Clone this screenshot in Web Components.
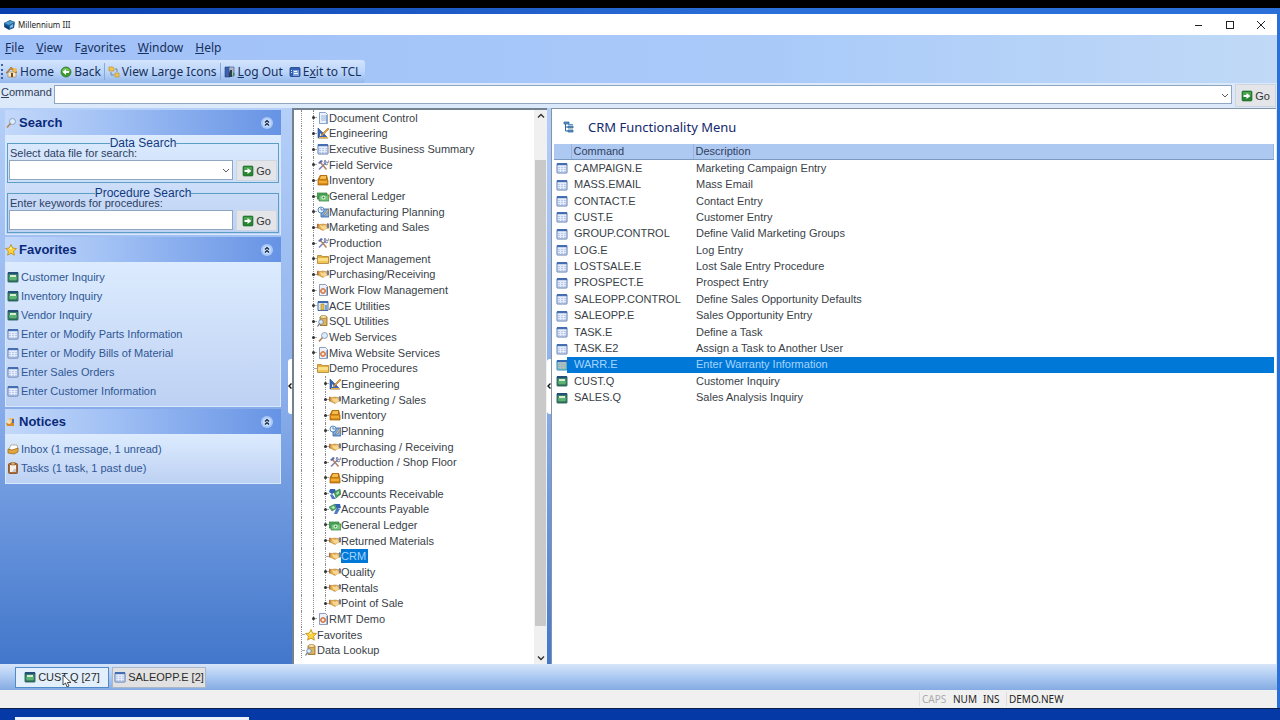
<!DOCTYPE html>
<html lang="en">
<head>
<meta charset="utf-8">
<title>Millennium III</title>
<style>
html, body { margin: 0; height: 100%; }
body { font: 11px/16px "Liberation Sans", Arial, sans-serif; color: #3a3f48; background: #0a3fae; overflow: hidden; }
</style>
</head>
<body>
<mi-app></mi-app>
<script>
const ICONS = {
  app: '<path d="M1 4l6-3 5 2-1 6-5 2-5-3z" fill="#1d5f96"/><path d="M1 4l6-2 5 1-6 3z" fill="#4e9ac9"/><path d="M2 6l4 2v2L2 8z" fill="#123c68"/><path d="M7 7l3-2v3l-3 1z" fill="#7fc0e2"/>',
  home: '<path d="M2 6h8v5H2z" fill="#f4ead2" stroke="#a97a34" stroke-width=".6"/><path d="M0 7l5-6 6 5-1 1-5-4-4 4z" fill="#d8922d" stroke="#8a5516" stroke-width=".5"/><path d="M5 7h2v4H5z" fill="#7a4a20"/><circle cx="9" cy="4" r="2" fill="#f5b949"/>',
  back: '<circle cx="6" cy="6" r="5" fill="#3f9a2d" stroke="#2b7221" stroke-width=".7"/><path d="M6 2a4 4 0 0 0-4 4h8a4 4 0 0 0-4-4z" fill="#86cf6a" opacity=".7"/><path d="M2.500 6l3.500-3v2h3v2H6v2z" fill="#fff"/>',
  large: '<path d="M1 1h4l1 1v3H1z" fill="#f2c44d" stroke="#b58a24" stroke-width=".6"/><path d="M7 7h4v4H7z" fill="#f2c44d" stroke="#b58a24" stroke-width=".6"/><path d="M3 6v3h3M7 3h2v3" fill="none" stroke="#7b8896"/>',
  logout: '<path d="M1 1h5v10H1z" fill="#3a62ae" stroke="#203c7c" stroke-width=".6"/><path d="M5 1h5v9H5z" fill="#a4b9da" stroke="#304f8c" stroke-width=".6"/><path d="M6 4h2v7H5V7z" fill="#2f3c52"/><circle cx="8" cy="3" r="1" fill="#d8b184"/><path d="M9 6l2 2-2 3z" fill="#3e9645"/>',
  exit: '<rect x="1" y="1.500" width="10" height="9" rx="1" fill="#3361b4" stroke="#203f86" stroke-width=".8"/><path d="M4 4h6v6H4z" fill="#7ea4e0"/><path d="M5 5h3v1H5zM5 7h4v1H5z" fill="#fff"/><path d="M2 4h1v1H2zM2 6h1v1H2z" fill="#dfe9ff"/>',
  go: '<rect x="1" y="1" width="10" height="10" rx="1" fill="#278533" stroke="#196226" stroke-width=".6"/><path d="M2 2h8v3H2z" fill="#5fb560" opacity=".6"/><path d="M2.500 5h3V3l4 3-4 3V7h-3z" fill="#fff"/>',
  search: '<circle cx="7.500" cy="4.500" r="3" fill="#dcecff" stroke="#8ba0bd"/><path d="M5.500 6.500L2 10.500" stroke="#b3865a" stroke-width="1.600"/>',
  star: '<path d="M6 .5l1.600 3.600 3.900.4-2.900 2.700.8 4L6 9.200l-3.400 2 .8-4L.5 4.500l3.900-.4z" fill="#fbd23f" stroke="#bd8a18" stroke-width=".8"/><path d="M6 2.500l1 2.500h-3z" fill="#fff3a8"/>',
  notice: '<path d="M4 2h5v6H4z" fill="#f2c069"/><path d="M1 7h5l3-4v7H2z" fill="#d58b27"/><circle cx="4" cy="6" r="2" fill="#f7dfa8"/><path d="M7 3h2v4H7z" fill="#5d6fa6"/>',
  form: '<rect x="1" y="1.500" width="10" height="9.500" rx=".5" fill="#e6edfa" stroke="#4f70aa" stroke-width=".9"/><path d="M1 1h10v2.200H1z" fill="#456db2"/><path d="M2 5h8v5H2z" fill="#b9cbed"/><path d="M2 6.500h8M2 8.500h8M4.500 5v5M7.500 5v5" stroke="#f3f7ff" stroke-width=".7"/>',
  inq: '<rect x="1" y="1.500" width="10" height="9.500" rx=".5" fill="#3d8a68" stroke="#2b5c66" stroke-width=".9"/><path d="M1 1h10v2.200H1z" fill="#234f78"/><path d="M3 4h6v2H3z" fill="#d8eecf"/><path d="M2 6h8l-1 4H3z" fill="#5db374"/><path d="M2 9.500h8v1H2z" fill="#225c4b"/>',
  inbox: '<path d="M4 2h6l1 4-5 3-4-3z" fill="#fff" stroke="#9d9377" stroke-width=".7"/><path d="M1 6l4 1 6-2v4l-4 2-6-1z" fill="#e0a53b" stroke="#94661b" stroke-width=".7"/>',
  tasks: '<rect x="1.500" y="1.500" width="9" height="10" rx="1" fill="#b2692c" stroke="#74411a" stroke-width=".7"/><path d="M3 3h6v7H3z" fill="#f8f2e7"/><path d="M4 0h4v3H4z" fill="#d9ad70" stroke="#74411a" stroke-width=".5"/><path d="M7 7h2v3H5z" fill="#c6c9cf"/>',
  doc: '<path d="M2.500.5h6l2 2v9h-8z" fill="#edf3fc" stroke="#6f8fc0" stroke-width=".8"/><path d="M4 4h5M4 6h5M4 8h5" stroke="#8fabd8" stroke-width=".9"/><path d="M9 3h2v9H9z" fill="#8aa8d6"/>',
  eng: '<path d="M1 1v10h10z" fill="#3b67bb" stroke="#254687" stroke-width=".6"/><path d="M3 6v3h3z" fill="#e9f0fb"/><path d="M11 1L5 7l-1 2 2-1 6-6z" fill="#e8a33a" stroke="#8a5a1d" stroke-width=".5"/><path d="M2 10h9v1.500H2z" fill="#e6b055"/>',
  tools: '<path d="M2 10.500l7-7" stroke="#7b83b8" stroke-width="1.600"/><path d="M9.500 10.500l-6-7" stroke="#b4825f" stroke-width="1.500"/><path d="M1 4l3-3 2 1-3 3z" fill="#5c6ca8"/><path d="M8 1l1 2 2 1 .5-2.500M8 1l-1 3 2 2 2-1" fill="none" stroke="#7a86aa"/>',
  box: '<path d="M1 5h9l1 1v5H1z" fill="#dc8d17" stroke="#93590c" stroke-width=".7"/><path d="M1 5l2-4h7l1 4z" fill="#b97013"/><path d="M3 4l1-2h5v3H3z" fill="#f4bd50"/><path d="M2 7h8v2H2z" fill="#f1ad36"/>',
  money: '<path d="M0 3h10v6H0z" fill="#4fac5c" stroke="#2b7b3b" stroke-width=".7"/><path d="M2 5h10v6H2z" fill="#74c57b" stroke="#2b7b3b" stroke-width=".7"/><circle cx="6.500" cy="7.500" r="2" fill="#e6f6df"/><circle cx="6.500" cy="7.500" r="1" fill="#348447"/>',
  plan: '<path d="M4 3h8v8H4z" fill="#7faee4" stroke="#315d9f" stroke-width=".8"/><circle cx="4" cy="4" r="3" fill="#e9f3fc" stroke="#447cba" stroke-width=".9"/><path d="M4 2v2h2" fill="none" stroke="#315d9f" stroke-width=".7"/><path d="M11 3L7 8l-1 2 2-1 4-5z" fill="#f0d9a1" stroke="#4d5568" stroke-width=".5"/>',
  hands: '<path d="M0 3l3 .5 3-.5 3 .5L12 3v4l-3 .5L6 9.500 2 7.500 0 7z" fill="#e6ad4b" stroke="#a9742c" stroke-width=".5"/><path d="M3 4l3 1 2-1 2 3-3 2-3-2z" fill="#f7d893"/><path d="M10 2l2 1v4l-2 0z" fill="#6b7ca6"/><path d="M0 3h1.500v4H0z" fill="#b46b48"/>',
  folder: '<path d="M.5 2.500h4l1 1h6v7H.5z" fill="#e3ae3e" stroke="#a47a22" stroke-width=".7"/><path d="M1 5h10v5H1z" fill="#fbdf87"/><path d="M1 8h10v2H1z" fill="#f0c557"/>',
  web: '<path d="M2.500.5h6l2 2v9h-8z" fill="#eef1f8" stroke="#7587ad" stroke-width=".8"/><circle cx="6" cy="7" r="2.500" fill="#e99b63" stroke="#bd5a31" stroke-width=".7"/><circle cx="6" cy="7" r="1" fill="#fff"/><path d="M9.500 3h1.500v8H9.500z" fill="#64779f"/>',
  ace: '<path d="M1 1.500h10v9H1z" fill="#dbe8f8" stroke="#375f9f" stroke-width=".9"/><path d="M1 1h10v2H1z" fill="#3c68ad"/><path d="M4 4h3v6H4z" fill="#e6be4f" stroke="#9a7421" stroke-width=".5"/><path d="M8 5h2v5H8z" fill="#74a2db"/>',
  sql: '<path d="M3 2h7v8.500H3z" fill="#dfb257" stroke="#8b6526" stroke-width=".8"/><ellipse cx="6.500" cy="2" rx="3.500" ry="1.500" fill="#f8e2a8" stroke="#8b6526" stroke-width=".6"/><circle cx="4" cy="7" r="2.300" fill="#dcebfa" stroke="#6684ac" stroke-width=".8"/><path d="M2.500 8.500l-2 3" stroke="#6d7480" stroke-width="1.200"/>',
  ar: '<path d="M1 1h5l1 3-4 2-3-2z" fill="#3462b3"/><path d="M5 4l6-3 1 5-5 4z" fill="#44a160" stroke="#26693b" stroke-width=".5"/><path d="M7 5l3-2v2L8 7z" fill="#b8e5bb"/><path d="M3 6l4 5H3L1 7z" fill="#4c7ac5"/>',
  ap: '<path d="M0 4l6-3 2 4-5 3z" fill="#4aa864" stroke="#26693b" stroke-width=".5"/><path d="M2 4l3-1 1 2-2 1z" fill="#bfe8c0"/><path d="M6 1h5l1 4-4 1z" fill="#3462b3"/><path d="M7 6h4l-3 5H5z" fill="#4c7ac5"/>',
  tree: '<path d="M1 1h5v2H1zM5 5h5v2H5zM5 9h5v2H5z" fill="#5b93c7" stroke="#32699f" stroke-width=".8"/><path d="M5 3.500h5" stroke="#5b93c7"/><path d="M2.500 3v7H5M2.500 6H5" fill="none" stroke="#32699f"/>',
  chev: '<path d="M3 5l3 3 3-3" fill="none" stroke="#555c66" stroke-width="1"/>',
  up: '<path d="M3 7.500l3-3 3 3" fill="none" stroke="#333" stroke-width="1.400"/>',
  down: '<path d="M3 4.500l3 3 3-3" fill="none" stroke="#333" stroke-width="1.400"/>',
  left: '<path d="M7.500 3.500L5 6l2.500 2.500" fill="none" stroke="#111" stroke-width="1.400"/>',
  collapse: '<circle cx="6" cy="6" r="6" fill="#a9c9f7"/><circle cx="6" cy="6" r="4" fill="#c8defb"/><path d="M4 5.500l2-2 2 2M4 8.500l2-2 2 2" fill="none" stroke="#10203f" stroke-width="1.200"/>',
  min: '<path d="M2 6.500h7" stroke="#222"/>',
  max: '<rect x="2.500" y="2.500" width="7" height="7" fill="none" stroke="#222"/>',
  close: '<path d="M2 2l8 8M10 2l-8 8" stroke="#222" stroke-width="1"/>',
  cursor: '<path d="M2 0v10l2.500-2 1.500 4 2-1-1.700-3.500H10z" fill="#fff" stroke="#222" stroke-width=".8"/>'
};

const define = (name, css, html) => customElements.define(name, class extends HTMLElement {
  connectedCallback() {
    if (this.shadowRoot) return;
    const root = this.attachShadow({ mode: 'open' });
    const markup = typeof html === 'function' ? html(this) : html;
    root.innerHTML = `<style>*{box-sizing:border-box}:host{display:block;box-sizing:border-box}button,input,select{font:inherit;color:inherit;margin:0}${css}</style>${markup}`;
  }
});
const icon = n => `<mi-icon name="${n}"></mi-icon>`;

define('mi-icon', ':host{display:block;flex:none;width:12px;height:12px}svg{display:block;width:100%;height:100%}',
  el => `<svg viewBox="0 0 12 12" aria-hidden="true">${ICONS[el.getAttribute('name')]}</svg>`);

define('mi-titlebar', `
:host{display:flex;align-items:center;height:21px;background:#fff;padding:0 10px 0 3px;gap:3px;font:8px/12px "Noto Sans",sans-serif;color:#222}
span{flex:1}
button{border:0;background:none;padding:0;margin-left:16px;width:12px;height:12px}`,
  `${icon('app')}<span>Millennium III</span>
  <button aria-label="Minimize">${icon('min')}</button><button aria-label="Maximize">${icon('max')}</button><button aria-label="Close">${icon('close')}</button>`);

define('mi-menubar', `
:host{display:flex;align-items:center;gap:12px;height:25px;padding:0 5px;font:12px/16px "Noto Sans",sans-serif;color:#16305c}
button{border:0;background:none;padding:0}`,
  '<button><u>F</u>ile</button><button><u>V</u>iew</button><button>F<u>a</u>vorites</button><button><u>W</u>indow</button><button><u>H</u>elp</button>');

define('mi-toolbar', `
:host{display:flex;height:23px;font:12px/16px "Noto Sans",sans-serif;color:#16305c}
div{display:flex;align-items:center;padding:0 1px;border-radius:0 3px 3px 0;background:linear-gradient(#d3e4fd,#bdd6fa 50%,#94b8ec)}
i{width:2px;height:15px;border-left:2px dotted #3f5f9f}
button{display:flex;align-items:center;gap:2px;border:0;background:none;padding:0 3px}
hr{width:1px;height:17px;border:0;margin:0;background:#88a8d8}`,
  `<div role="toolbar"><i></i><button>${icon('home')}Home</button><button>${icon('back')}Back</button><hr><button>${icon('large')}View Large Icons</button><hr><button>${icon('logout')}<span><u>L</u>og Out</span></button><button>${icon('exit')}<span>E<u>x</u>it to TCL</span></button></div>`);

define('mi-go', `
:host{display:block;flex:none}
button{display:flex;align-items:center;justify-content:center;gap:2px;width:41px;height:100%;padding:0;border:1px solid #cdd5e0;background:#e3e5e8;color:#333}`,
  `<button>${icon('go')}Go</button>`);

define('mi-select', `
:host{display:block;position:relative}
select{display:block;width:100%;height:100%;appearance:none;background:#fff;border:1px solid #8fa6c0;border-radius:0;padding:0 14px 0 3px}
mi-icon{position:absolute;right:1px;top:0;bottom:0;margin:auto;pointer-events:none}`,
  el => `<select aria-label="${el.getAttribute('label')}"><option></option></select>${icon('chev')}`);

define('mi-commandbar', `
:host{display:flex;height:25px;padding:1px;gap:3px;background:#dce9fa;color:#2e3d58}
span{width:50px;line-height:16px}
mi-select{flex:1;margin:1px 0 3px}`,
  `<span><u>C</u>ommand</span><mi-select label="Command"></mi-select><mi-go></mi-go>`);

define('mi-group', `
header{display:flex;align-items:center;gap:2px;height:25px;padding:0 8px 0 0;background:linear-gradient(90deg,#c3d8fa,#9fbff4 40%,#6693e4)}
h2{flex:1;margin:0;font:bold 13px/16px "Liberation Sans",sans-serif;color:#0a2a78}
button{border:0;background:none;padding:0}
section{border:1px solid #d9e8fc;border-top:0;background:linear-gradient(#dcebfe,#bdd1f3)}`,
  el => `<header>${icon(el.getAttribute('icon'))}<h2>${el.getAttribute('heading')}</h2><button aria-label="Collapse">${icon('collapse')}</button></header><section><slot></slot></section>`);

define('mi-search', `
:host{display:grid;gap:5px;padding:3px 1px 1px}
fieldset{min-width:0;margin:0;padding:0 1px 1px;border:1px solid #5b9fc6;color:#2d4062}
legend{margin:0 auto;padding:0;font-size:12px;line-height:10px;color:#123a80}
label{display:block;line-height:10px;padding-left:1px;margin-bottom:2px}
div{display:flex;gap:3px;height:21px}
mi-select,input{flex:1;min-width:0;height:20px}
input{border:1px solid #8fa6c0;background:#fff;padding:0 3px}`,
  `<fieldset><legend>Data Search</legend><label>Select data file for search:</label><div><mi-select label="Select data file for search:"></mi-select><mi-go></mi-go></div></fieldset>
  <fieldset><legend>Procedure Search</legend><label for="kw">Enter keywords for procedures:</label><div><input id="kw"><mi-go></mi-go></div></fieldset>`);

define('mi-link', `
a{display:flex;align-items:center;gap:2px;height:19px;color:#2f5794;text-decoration:none}`,
  el => `<a href="#">${icon(el.getAttribute('icon'))}<slot></slot></a>`);

define('mi-sidebar', `
:host{display:flex;flex-direction:column;gap:2px;padding:2px 5px}
nav{padding:5px 1px 6px}`,
  `<mi-group icon="search" heading="Search"><mi-search></mi-search></mi-group>
  <mi-group icon="star" heading="Favorites"><nav>
    <mi-link icon="inq">Customer Inquiry</mi-link><mi-link icon="inq">Inventory Inquiry</mi-link><mi-link icon="inq">Vendor Inquiry</mi-link>
    <mi-link icon="form">Enter or Modify Parts Information</mi-link><mi-link icon="form">Enter or Modify Bills of Material</mi-link>
    <mi-link icon="form">Enter Sales Orders</mi-link><mi-link icon="form">Enter Customer Information</mi-link></nav></mi-group>
  <mi-group icon="notice" heading="Notices"><nav>
    <mi-link icon="inbox">Inbox (1 message, 1 unread)</mi-link><mi-link icon="tasks">Tasks (1 task, 1 past due)</mi-link></nav></mi-group>`);

define('mi-splitter', `
:host{display:flex;align-items:center;justify-content:flex-end}
div{width:4px;height:55px;display:flex;align-items:center;justify-content:center;background:#fff;border-radius:3px 0 0 3px;overflow:hidden}`,
  `<div>${icon('left')}</div>`);

const TREE = [
  [1, 'doc', 'Document Control'], [1, 'eng', 'Engineering'], [1, 'form', 'Executive Business Summary'], [1, 'tools', 'Field Service'],
  [1, 'box', 'Inventory'], [1, 'money', 'General Ledger'], [1, 'plan', 'Manufacturing Planning'], [1, 'hands', 'Marketing and Sales'],
  [1, 'tools', 'Production'], [1, 'folder', 'Project Management'], [1, 'hands', 'Purchasing/Receiving'], [1, 'web', 'Work Flow Management'],
  [1, 'ace', 'ACE Utilities'], [1, 'sql', 'SQL Utilities'], [1, 'search', 'Web Services'], [1, 'web', 'Miva Website Services'],
  [1, 'folder', 'Demo Procedures', 'open'], [2, 'eng', 'Engineering'], [2, 'hands', 'Marketing / Sales'], [2, 'box', 'Inventory'],
  [2, 'plan', 'Planning'], [2, 'hands', 'Purchasing / Receiving'], [2, 'tools', 'Production / Shop Floor'], [2, 'box', 'Shipping'],
  [2, 'ar', 'Accounts Receivable'], [2, 'ap', 'Accounts Payable'], [2, 'money', 'General Ledger'], [2, 'hands', 'Returned Materials'],
  [2, 'hands', 'CRM', 'selected'], [2, 'hands', 'Quality'], [2, 'hands', 'Rentals'], [2, 'hands', 'Point of Sale'],
  [1, 'web', 'RMT Demo'], [0, 'star', 'Favorites', 'open'], [0, 'sql', 'Data Lookup', 'open']
];

define('mi-tree', `
:host{display:flex;background:#fff;border:solid #74828f;border-width:2px 0 0 2px}
ul{flex:1;display:grid;grid-auto-rows:1fr;margin:0 0 6px;padding:0 0 0 7px;list-style:none}
li{display:flex;align-items:center;min-height:0;line-height:14px;white-space:nowrap}
i{flex:none;align-self:stretch;width:12px;border-left:1px dotted #8d8d8d}
i:last-of-type{width:4px;display:flex;align-items:center}
i:last-of-type::before{content:"";width:100%;height:1px;background:#aaa}
b{flex:none;width:3px;height:3px;margin:0 2px 0 -5px;border-radius:2px;background:#333}
span{padding:0 1px 0 0}
.selected span{background:#0078d7;color:#a6d5ff;padding-right:2px}
.bar{width:13px;display:flex;flex-direction:column;align-items:center;justify-content:space-between;background:#f0f0f0}
.bar div{flex:1;width:11px;margin:38px 0 26px;background:#c9c9c9}`,
  `<ul role="tree">${TREE.map(([d, ic, t, s = '']) => `<li role="treeitem" aria-level="${d + 1}" class="${s}">${'<i></i>'.repeat(d + 1)}${s ? '' : '<b></b>'}${icon(ic)}<span>${t}</span></li>`).join('')}</ul><div class="bar">${icon('up')}<div></div>${icon('down')}</div>`);

const PROCS = [
  ['CAMPAIGN.E', 'Marketing Campaign Entry'], ['MASS.EMAIL', 'Mass Email'], ['CONTACT.E', 'Contact Entry'], ['CUST.E', 'Customer Entry'],
  ['GROUP.CONTROL', 'Define Valid Marketing Groups'], ['LOG.E', 'Log Entry'], ['LOSTSALE.E', 'Lost Sale Entry Procedure'],
  ['PROSPECT.E', 'Prospect Entry'], ['SALEOPP.CONTROL', 'Define Sales Opportunity Defaults'], ['SALEOPP.E', 'Sales Opportunity Entry'],
  ['TASK.E', 'Define a Task'], ['TASK.E2', 'Assign a Task to Another User'], ['WARR.E', 'Enter Warranty Information'],
  ['CUST.Q', 'Customer Inquiry'], ['SALES.Q', 'Sales Analysis Inquiry']
];

define('mi-procedures', `
:host{background:#fff;border:solid #8594a4;border-width:1px 0 0 1px;padding:0 2px}
header{display:flex;align-items:center;gap:13px;height:35px;padding-left:9px}
h1{margin:0;font:13px/18px "Noto Sans",sans-serif;color:#14286c}
table{width:100%;height:262px;border-collapse:collapse;table-layout:fixed}
col:first-child{width:17px}col:nth-child(2){width:122px}
th,td{padding:0 2px;font-weight:normal;text-align:left;line-height:15px;white-space:nowrap}
td{padding:0 3px}
thead th{background:#aec9f1;border-bottom:1px solid #7c9ac0;border-right:1px solid #98b4dd;color:#30415f}
td:first-child{padding:0 2px}
.selected td{background:#0078d7;color:#a6d5ff}
.selected td:first-child{background:linear-gradient(90deg,#fff 13px,#0078d7 13px)}
.selected mi-icon{filter:sepia(1) hue-rotate(175deg) saturate(4) brightness(.75)}`,
  `<header>${icon('tree')}<h1>CRM Functionality Menu</h1></header>
  <table><colgroup><col><col><col></colgroup><thead><tr><th aria-label="Type"></th><th>Command</th><th>Description</th></tr></thead>
  <tbody>${PROCS.map(([c, d]) => `<tr${c === 'WARR.E' ? ' class="selected"' : ''}><td>${icon(c.endsWith('Q') ? 'inq' : 'form')}</td><td>${c}</td><td>${d}</td></tr>`).join('')}</tbody></table>`);

define('mi-tabs', `
:host{display:flex;align-items:center;gap:3px;height:26px;padding:0 15px;background:linear-gradient(#d7e5f9,#b4cff4 40%,#84abe3)}
button{position:relative;display:flex;align-items:center;justify-content:center;gap:2px;width:94px;height:21px;padding:0;border:1px solid #a9b7c8;background:#e1e1e1;color:#2b2b2b;white-space:nowrap}
.on{background:#e3f0fc;border-color:#4f8bc8}
.pointer{position:absolute;left:45px;top:7px}`,
  `<button class="on">${icon('inq')}CUST.Q [27]<mi-icon class="pointer" name="cursor"></mi-icon></button><button>${icon('form')}SALEOPP.E [2]</button>`);

define('mi-status', `
:host{display:flex;align-items:center;height:18px;background:#f0f0f0;font:10px/14px "Noto Sans",sans-serif;color:#222}
span{flex:none;width:30px;padding-left:2px}
.push{flex:1}.caps{width:32px;border-left:1px solid #ddd;color:#aaa}.ins{width:25px}
.account{width:271px;border-left:1px solid #ddd}`,
  '<div class="push"></div><span class="caps">CAPS</span><span class="num">NUM</span><span class="ins">INS</span><span class="account">DEMO.NEW</span>');

define('mi-app', `
:host{display:flex;flex-direction:column;height:100vh;border-top:8px solid #000;background:linear-gradient(90deg,#0a3fae,#2b6fd8 60%,#2b6fd8)}
.window{flex:1;min-height:0;display:flex;flex-direction:column;margin:6px 3px 0 0;background:linear-gradient(90deg,#a0c0f8,#a9caf9 60%,#c0d9f6)}
main{flex:1;min-height:0;display:grid;grid-template-columns:286px 6px 255px 4px 1fr;background:linear-gradient(#b4cff8,#8db0ec 50%,#4277cb);border-right:1px solid #dce9fa}
.desktop{height:12px;padding-left:15px;display:flex;align-items:flex-end;border-top:1px solid #0a2050;background:#0439a6}
.desktop div{width:234px;height:3px;background:#eef3fb}`,
  `<div class="window"><mi-titlebar></mi-titlebar><mi-menubar></mi-menubar><mi-toolbar></mi-toolbar><mi-commandbar></mi-commandbar>
  <main><mi-sidebar></mi-sidebar><mi-splitter></mi-splitter><mi-tree></mi-tree><mi-splitter></mi-splitter><mi-procedures></mi-procedures></main>
  <mi-tabs></mi-tabs><mi-status></mi-status></div><div class="desktop"><div></div></div>`);
</script>
</body>
</html>
